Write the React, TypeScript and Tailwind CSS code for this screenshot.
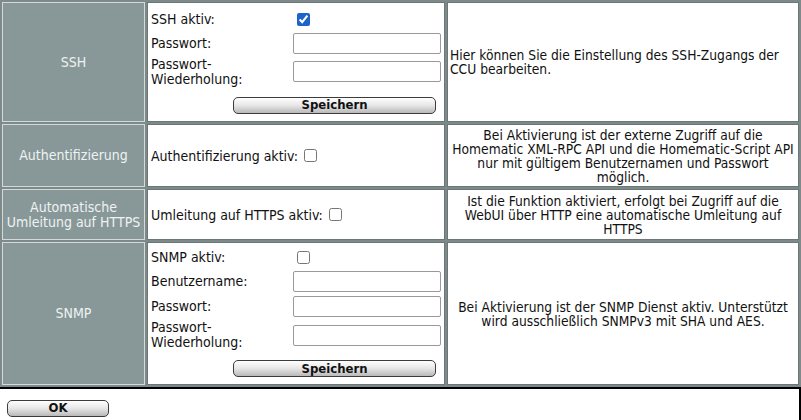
import React from "react";

const font = { fontFamily: '"DejaVu Sans Condensed", "DejaVu Sans", Verdana, sans-serif' };

function Btn({ label, className = "" }: { label: string; className?: string }) {
  return (
    <button
      className={`h-[17px] rounded-[5px] border border-[#3c3c3c] bg-gradient-to-b from-white via-[#e6e6e6] to-[#b9b9b9] text-[13px] font-bold leading-[14px] text-[#111] ${className}`}
    >
      {label}
    </button>
  );
}

function Field() {
  return <input type="text" className="h-[21px] w-[148px] rounded-[2px] border border-[#999] bg-white" />;
}

function Check({ checked = false }: { checked?: boolean }) {
  return (
    <input
      type="checkbox"
      defaultChecked={checked}
      className="m-0 h-[13px] w-[13px] accent-[#1d63c9]"
    />
  );
}

function Label({ children }: { children: React.ReactNode }) {
  return <div className="w-[142px] shrink-0 leading-[15px]">{children}</div>;
}

function PasswordRows() {
  return (
    <>
      <div className="flex h-[25px] items-center">
        <Label>Passwort:</Label>
        <Field />
      </div>
      <div className="flex h-[32px] items-center">
        <Label>
          Passwort-
          <br />
          Wiederholung:
        </Label>
        <Field />
      </div>
    </>
  );
}

const leftCell = "border border-[#d3dada] bg-[#889898] text-center align-middle leading-[15px] text-[#eef2f2]";
const midCell = "border border-[#6c7777] bg-white px-[3px] align-middle leading-[16px] text-[#111]";
const rightCell =
  "border border-[#6c7777] bg-white px-[1px] align-middle whitespace-nowrap text-[13.7px] leading-[14px] text-[#111]";

export default function App() {
  return (
    <div className="h-[420px] w-[801px] overflow-hidden bg-white text-[14px]" style={font}>
      <table className="w-[801px] table-fixed border-separate border-spacing-[2px] bg-[#7e8989]">
        <tbody>
          <tr>
            <td className={`${leftCell} h-[120px] w-[143px]`}>SSH</td>
            <td className={`${midCell} w-[298px]`}>
              <div className="flex flex-col pt-[2px]">
                <div className="flex h-[23px] items-center">
                  <Label>SSH aktiv:</Label>
                  <span className="ml-[4px] flex">
                    <Check checked />
                  </span>
                </div>
                <PasswordRows />
                <div className="flex justify-end pr-[5px] pt-[9px] pb-[5px]">
                  <Btn label="Speichern" className="w-[203px]" />
                </div>
              </div>
            </td>
            <td className={`${rightCell} pl-[2px]`}>
              Hier können Sie die Einstellung des SSH-Zugangs der
              <br />
              CCU bearbeiten.
            </td>
          </tr>
          <tr>
            <td className={`${leftCell} h-[63px]`}>Authentifizierung</td>
            <td className={midCell}>
              <div className="flex items-center gap-[6px]">
                <span>Authentifizierung aktiv:</span>
                <Check />
              </div>
            </td>
            <td className={`${rightCell} text-center`}>
              Bei Aktivierung ist der externe Zugriff auf die
              <br />
              Homematic XML-RPC API und die Homematic-Script API
              <br />
              nur mit gültigem Benutzernamen und Passwort
              <br />
              möglich.
            </td>
          </tr>
          <tr>
            <td className={`${leftCell} h-[51px]`}>
              Automatische
              <br />
              Umleitung auf HTTPS
            </td>
            <td className={midCell}>
              <div className="flex items-center gap-[6px]">
                <span>Umleitung auf HTTPS aktiv:</span>
                <Check />
              </div>
            </td>
            <td className={`${rightCell} text-center`}>
              Ist die Funktion aktiviert, erfolgt bei Zugriff auf die
              <br />
              WebUI über HTTP eine automatische Umleitung auf
              <br />
              HTTPS
            </td>
          </tr>
          <tr>
            <td className={`${leftCell} h-[143px]`}>SNMP</td>
            <td className={midCell}>
              <div className="flex flex-col">
                <div className="flex h-[24px] items-center">
                  <Label>SNMP aktiv:</Label>
                  <span className="ml-[4px] flex">
                    <Check />
                  </span>
                </div>
                <div className="flex h-[25px] items-center">
                  <Label>Benutzername:</Label>
                  <Field />
                </div>
                <PasswordRows />
                <div className="flex justify-end pr-[5px] pt-[9px] pb-[5px]">
                  <Btn label="Speichern" className="w-[203px]" />
                </div>
              </div>
            </td>
            <td className={`${rightCell} text-center`}>
              Bei Aktivierung ist der SNMP Dienst aktiv. Unterstützt
              <br />
              wird ausschließlich SNMPv3 mit SHA und AES.
            </td>
          </tr>
        </tbody>
      </table>
      <div className="h-[40px] border-t-2 border-r-2 border-black pl-[7px] pt-[8px]">
        <Btn label="OK" className="w-[102px]" />
      </div>
    </div>
  );
}
